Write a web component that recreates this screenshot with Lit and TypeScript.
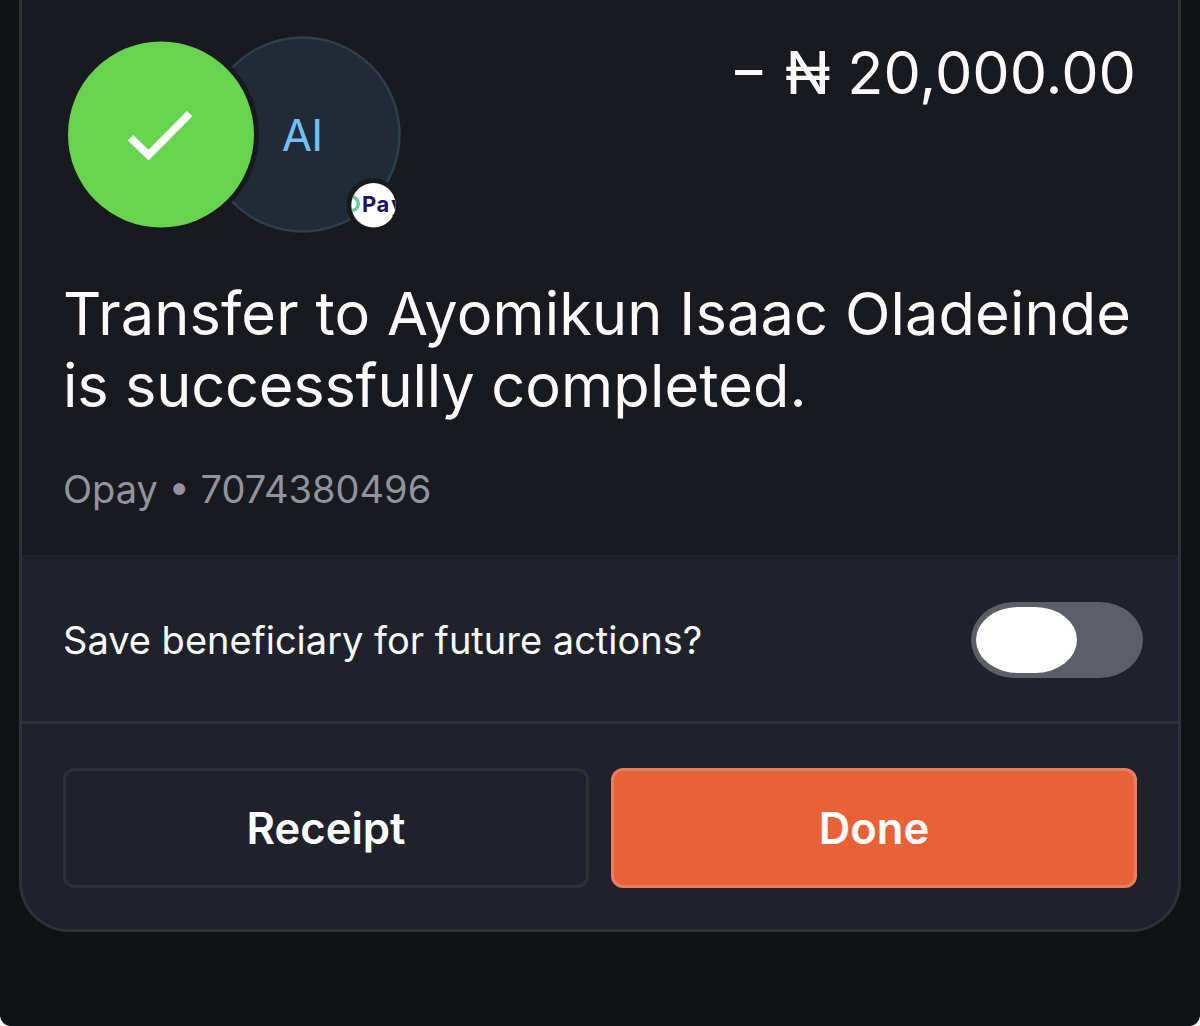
import { LitElement, html, css, svg } from "lit";
import { customElement, property, state } from "lit/decorators.js";
import { classMap } from "lit/directives/class-map.js";

@customElement("transfer-avatars")
class TransferAvatars extends LitElement {
  static styles = css`
    :host { display: block; }
    svg { display: block; }
    .initials {
      font: 400 44px Inter, sans-serif;
      letter-spacing: -0.9px;
      fill: #6fc2f5;
      text-anchor: middle;
    }
    .brand {
      font: 700 22px Inter, sans-serif;
      fill: #210f60;
    }
  `;

  @property({ type: String }) initials = "";

  render() {
    return html`
      <svg width="340" height="200" viewBox="0 0 340 200">
        ${svg`
          <clipPath id="badge"><circle cx="309.5" cy="169.2" r="22.2"/></clipPath>
          <circle cx="238.5" cy="98.5" r="97" fill="#212b35" stroke="#2d3f4d" stroke-width="2.5"/>
          <circle cx="97" cy="98.5" r="98" fill="#191a1f"/>
          <circle cx="97" cy="98.5" r="93" fill="#68d34f"/>
          <path d="M66.5 101.7 L84.5 119.2 L125.6 77.6" fill="none" stroke="#fff" stroke-width="7.6"/>
          <text class="initials" x="238" y="114.8">${this.initials}</text>
          <circle cx="309.5" cy="169.2" r="27" fill="#191a1f"/>
          <circle cx="309.5" cy="169.2" r="22.2" fill="#fff"/>
          <g clip-path="url(#badge)">
            <circle cx="287.5" cy="167.8" r="6.8" fill="none" stroke="#5fc9a5" stroke-width="3.4"/>
            <text class="brand" x="298 312.5 327" y="176">Pay</text>
          </g>
        `}
      </svg>
    `;
  }
}

@customElement("app-root")
class AppRoot extends LitElement {
  static styles = css`
    :host {
      display: block;
      height: 1026px;
      background: #fff;
      font-family: Inter, sans-serif;
      color: #fafafb;
    }
    * { box-sizing: border-box; }
    .screen {
      height: 100%;
      padding: 0 19px;
      background: #111215;
      border-radius: 0 0 11px 11px;
    }
    .card {
      height: 932px;
      border: 3px solid #2f3137;
      border-top: none;
      border-radius: 0 0 50px 50px;
      background: #1f222a;
      overflow: hidden;
    }
    .summary {
      height: 555px;
      padding: 36px 41px 0 42px;
      background: #191a1f;
    }
    .top {
      display: flex;
      justify-content: space-between;
      height: 242px;
    }
    .amount {
      margin-top: 7px;
      padding-right: 1px;
      font-size: 59.3px;
      line-height: 60px;
      white-space: pre;
    }
    h1 {
      margin: 0 0 0 -1px;
      font-size: 59.5px;
      font-weight: 400;
      line-height: 71.5px;
      letter-spacing: 0.11px;
      white-space: nowrap;
    }
    .tight { letter-spacing: -0.2px; }
    .account {
      margin: 44px 0 0 -1px;
      font-size: 38px;
      line-height: 48px;
      color: #92939f;
    }
    .save {
      display: flex;
      align-items: center;
      justify-content: space-between;
      height: 169px;
      padding: 3px 35px 0 41px;
      border-bottom: 3px solid #2d3036;
      font-size: 38px;
    }
    .toggle {
      display: flex;
      width: 172px;
      height: 76px;
      padding: 5px;
      border: none;
      border-radius: 43px / 38px;
      background: #5c5f67;
    }
    .toggle.on {
      justify-content: flex-end;
      background: #68d34f;
    }
    .knob {
      width: 101px;
      height: 66px;
      border-radius: 42px / 33px;
      background: #fff;
    }
    .actions {
      display: flex;
      gap: 22px;
      padding: 44px 41px 0;
    }
    .button {
      flex: 1;
      height: 120px;
      padding: 0;
      border: 3px solid #2d3036;
      border-radius: 12px;
      background: none;
      font: 600 43.6px Inter, sans-serif;
      color: #fff;
    }
    .button.primary {
      border-color: #e57f5d;
      background: #e96237;
    }
  `;

  @state() saveBeneficiary = false;

  render() {
    return html`
      <div class="screen">
        <div class="card">
          <div class="summary">
            <div class="top">
              <transfer-avatars initials="AI"></transfer-avatars>
              <div class="amount">− ₦ 20,000.00</div>
            </div>
            <h1>Transfer to Ayomikun Isaac Oladeinde<br><span class="tight">is successfully</span> completed.</h1>
            <p class="account">Opay • 7074380496</p>
          </div>
          <div class="save">
            <span class="question">Save beneficiary for future actions?</span>
            <button
              class=${classMap({ toggle: true, on: this.saveBeneficiary })}
              role="switch"
              aria-checked=${this.saveBeneficiary}
              @click=${this.toggleSave}
            ><span class="knob"></span></button>
          </div>
          <div class="actions">
            <button class="button">Receipt</button>
            <button class="button primary">Done</button>
          </div>
        </div>
      </div>
    `;
  }

  toggleSave() {
    this.saveBeneficiary = !this.saveBeneficiary;
  }
}
